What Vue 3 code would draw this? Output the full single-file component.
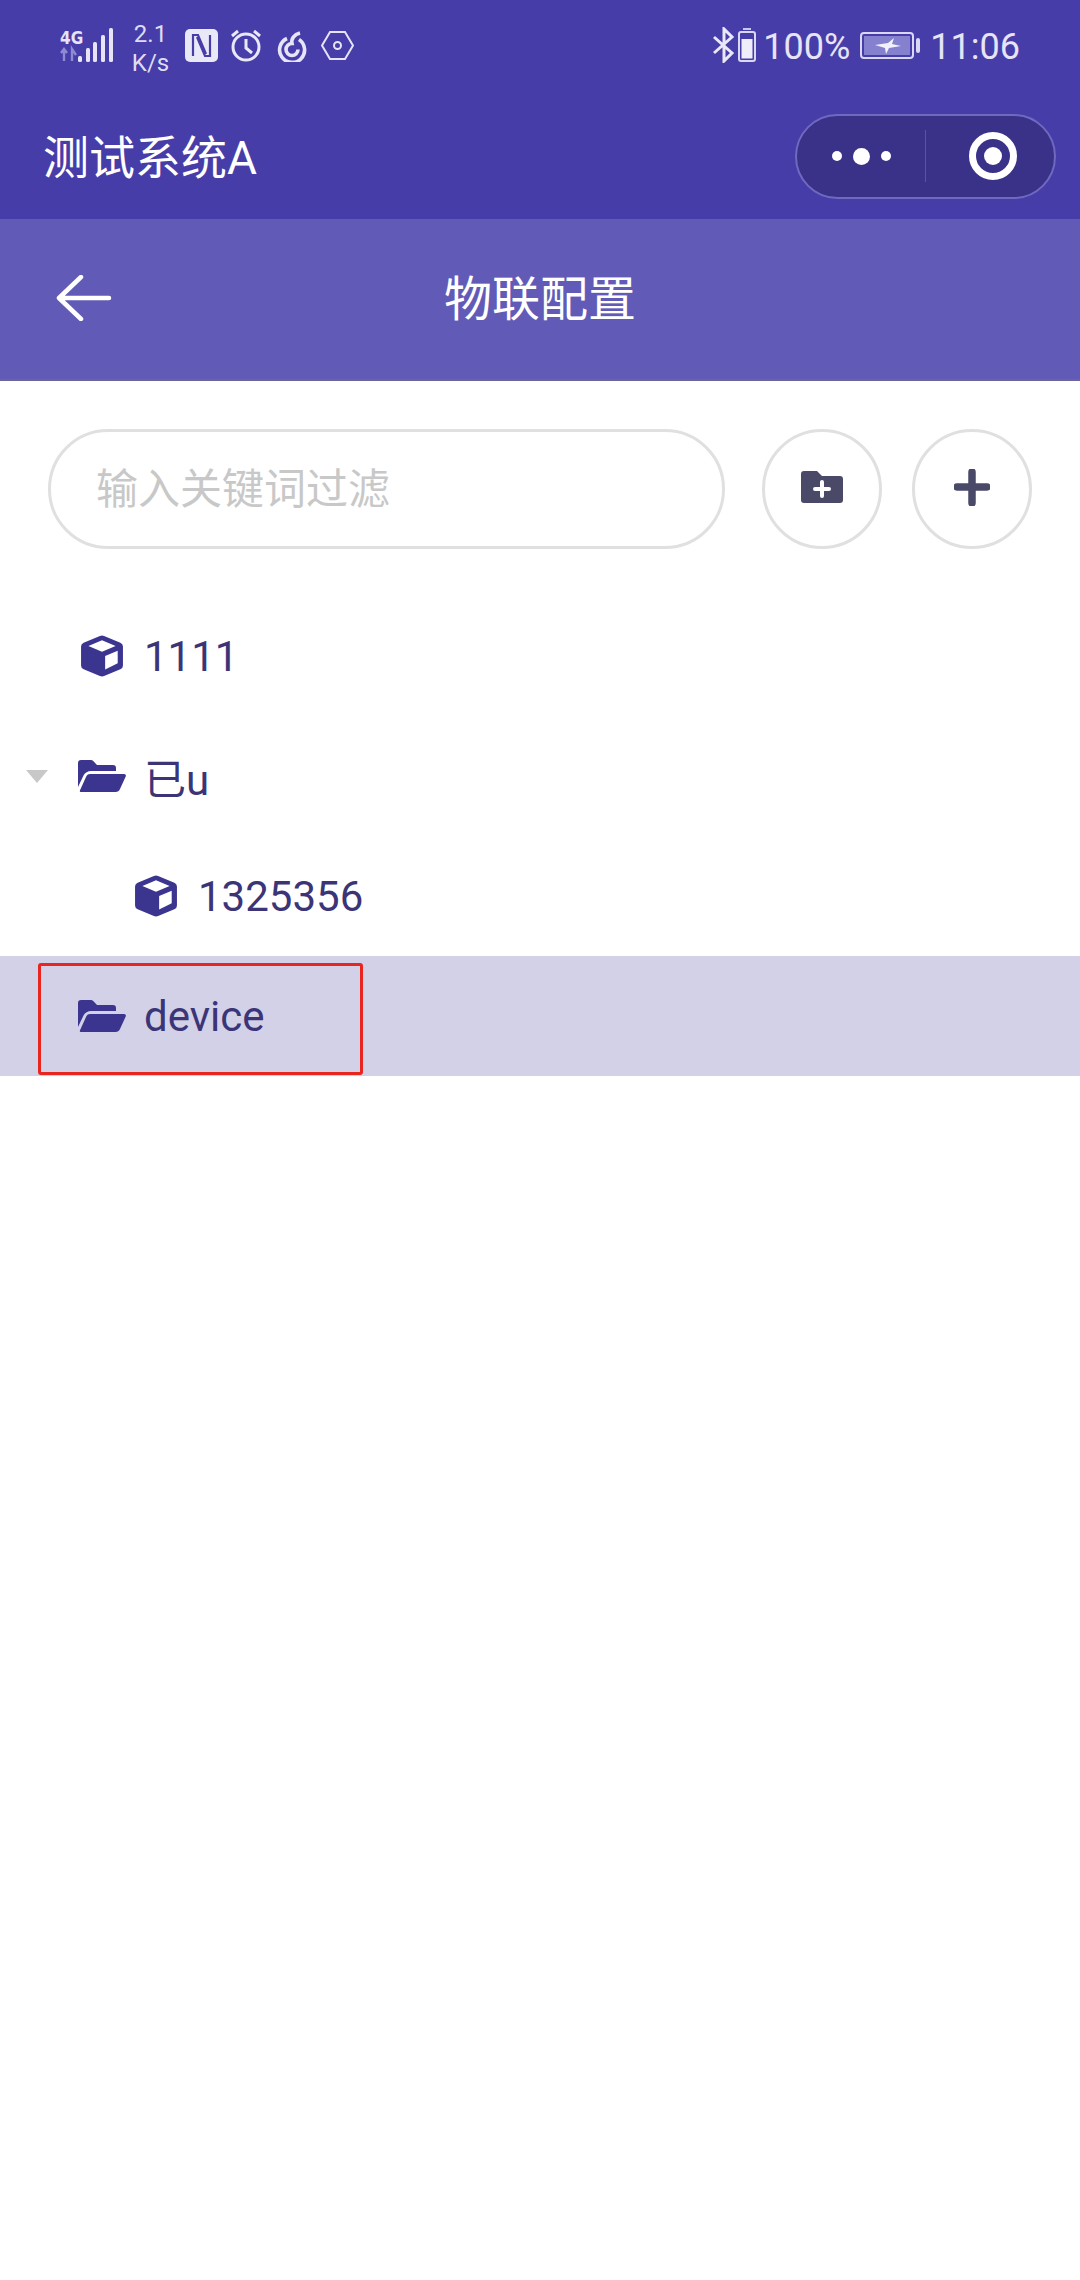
<template>
  <div class="page">
    <header class="top">
      <div class="status">
        <div class="status-left">
          <svg class="signal" width="53" height="34" viewBox="0 0 53 34">
            <text x="0" y="16" class="net">4G</text>
            <path d="M4 21v12M1 25l3-4 3 4M12 33V21l4 6" fill="none" stroke="#8f8ad2" stroke-width="2.4" />
            <rect x="18" y="28" width="4" height="6" rx="1.5" fill="#e6e4f6" />
            <rect x="26" y="20" width="4" height="14" rx="1.5" fill="#e6e4f6" />
            <rect x="33" y="14" width="4" height="20" rx="1.5" fill="#e6e4f6" />
            <rect x="41" y="7" width="4" height="27" rx="1.5" fill="#e6e4f6" />
            <rect x="49" y="0" width="4" height="34" rx="1.5" fill="#e6e4f6" />
          </svg>
          <div class="speed"><span>2.1</span><span>K/s</span></div>
          <svg class="ic-n" width="33" height="33" viewBox="0 0 33 33">
            <rect width="33" height="33" rx="5" fill="#e9e8f7" />
            <path d="M8 27V6h5l8 19M25 6v21h-5L12 8" fill="none" stroke="#473da9" stroke-width="2.2" />
          </svg>
          <svg class="ic-alarm" width="32" height="33" viewBox="0 0 32 33" fill="none" stroke="#e9e8f7" stroke-width="3">
            <circle cx="16" cy="18" r="13" />
            <path d="M16 10v9l6 5M2 7l6-5M30 7l-6-5" />
          </svg>
          <svg class="ic-music" width="30" height="31" viewBox="0 0 30 31" fill="none" stroke="#e6e4f6" stroke-width="3.6">
            <path d="M10 7.500A12.500 12.500 0 1 0 22 8.500" />
            <path d="M21 18.500a6 6 0 1 1-6-6C14 8 17 3.500 23 2" />
          </svg>
          <svg class="ic-hex" width="33" height="29" viewBox="0 0 33 29" fill="none" stroke="#e6e4f6" stroke-width="2">
            <path d="M9 1h15l8 13.500-8 13.500H9L1 14.500z" />
            <circle cx="16.500" cy="14.500" r="3.500" />
          </svg>
        </div>
        <div class="status-right">
          <svg class="ic-bt" width="23" height="36" viewBox="0 0 23 36" fill="none" stroke="#e9e8f7" stroke-width="3">
            <path d="M2 10l18 16-8 8V2l8 8L2 26" />
          </svg>
          <svg class="ic-cell" width="18" height="34" viewBox="0 0 18 34">
            <rect x="5" y="0" width="8" height="2" fill="#c9c6ec" />
            <rect x="1" y="4" width="16" height="29" rx="2" fill="none" stroke="#d9d7f2" stroke-width="2" />
            <rect x="3.500" y="11" width="11" height="19.500" fill="#eeedf9" />
          </svg>
          <span class="pct">100%</span>
          <svg class="ic-batt" width="60" height="27" viewBox="0 0 60 27">
            <rect x="1" y="1" width="52" height="25" rx="3" fill="none" stroke="#d9d7f2" stroke-width="2" />
            <rect x="4" y="4" width="46" height="19" fill="#8681cf" />
            <path d="M15 13l13-2 6-5-2 6 9 2-12 2-3 6-1-6z" fill="#f2f1fb" />
            <rect x="56" y="6" width="4" height="15" rx="2" fill="#d9d7f2" />
          </svg>
          <span class="time">11:06</span>
        </div>
      </div>
      <div class="app-bar">
        <span class="app-title">测试系统A</span>
        <div class="capsule">
          <div class="capsule-more">
            <i class="dot"></i><i class="dot big"></i><i class="dot"></i>
          </div>
          <div class="capsule-line"></div>
          <div class="capsule-close"><i class="target"></i></div>
        </div>
      </div>
    </header>

    <nav class="sub-bar">
      <svg class="back" width="56" height="46" viewBox="0 0 56 46" fill="none" stroke="#fff" stroke-width="4.500" stroke-linecap="round" stroke-linejoin="round">
        <path d="M25 2L3 23l22 21M3 23h50" />
      </svg>
      <span class="sub-title">物联配置</span>
    </nav>

    <div class="search-row">
      <div class="search"><span>输入关键词过滤</span></div>
      <button class="round-btn">
        <svg width="42" height="32" viewBox="0 0 42 32">
          <path d="M3 0h13l5 5h18a3 3 0 0 1 3 3v21a3 3 0 0 1-3 3H3a3 3 0 0 1-3-3V3a3 3 0 0 1 3-3z" fill="#4a4a68" />
          <path d="M21 11v14M14 18h14" stroke="#fff" stroke-width="4" stroke-linecap="round" />
        </svg>
      </button>
      <button class="round-btn">
        <svg width="36" height="37" viewBox="0 0 36 37">
          <path d="M18 3v31M3 18h30" stroke="#4a4a68" stroke-width="7.500" stroke-linecap="round" />
        </svg>
      </button>
    </div>

    <ul class="tree">
      <li v-for="node in nodes" :key="node.label" class="tree-row" :class="{ active: node.active }" :style="{ paddingLeft: node.indent + 'px' }">
        <span v-if="node.caret" class="caret"></span>
        <svg v-if="node.type === 'cube'" class="ic-cube" width="44" height="42" viewBox="0 0 42 40">
          <path d="M19 .800a5 5 0 0 1 4 0l15.500 6.500a4 4 0 0 1 2.500 3.700v18a4 4 0 0 1-2.500 3.700L23 39.200a5 5 0 0 1-4 0L3.500 32.700A4 4 0 0 1 1 29V11a4 4 0 0 1 2.500-3.700z" fill="#3b3590" />
          <path d="M21 5l13 5.500L21 16 8 10.500z" fill="#fff" />
          <path d="M24 20l12-5v12l-12 6z" fill="#fff" />
        </svg>
        <svg v-else class="ic-folder" width="48" height="32" viewBox="0 0 48 32">
          <path d="M0 3a3 3 0 0 1 3-3h10a3 3 0 0 1 2 .8L19 5h16a3 3 0 0 1 3 3v3H13c-3 0-6 1.500-7.500 4.500L0 27z" fill="#3b3590" />
          <path d="M12 14h34c1.500 0 2.300 1.200 1.700 2.500L42 29c-.8 1.800-2.300 3-4.500 3H3c-1 0-1.500-.8-1-1.800L8 17c.8-2 2-3 4-3z" fill="#3b3590" />
        </svg>
        <span class="tree-label">{{ node.label }}</span>
        <div v-if="node.active" class="focus-box"></div>
      </li>
    </ul>
  </div>
</template>

<script setup>
const nodes = [
  { label: '1111', type: 'cube', indent: 80 },
  { label: '已u', type: 'folder', indent: 26, caret: true },
  { label: '1325356', type: 'cube', indent: 134 },
  { label: 'device', type: 'folder', indent: 78, active: true }
]
</script>

<style scoped>
.page {
  width: 1080px;
  height: 2280px;
  background: #fff;
  font-family: Roboto, "Noto Sans CJK SC", sans-serif;
  overflow: hidden;
}

.top {
  height: 219px;
  background: #473da9;
  box-sizing: border-box;
}

.status {
  height: 92px;
  display: flex;
  justify-content: space-between;
  padding: 20px 60px 0;
  box-sizing: border-box;
}

.status-left,
.status-right {
  display: flex;
  align-items: flex-start;
}

.signal {
  margin-top: 8px;
}

.net {
  font-family: "Liberation Sans Narrow", "DejaVu Sans Condensed", Roboto, sans-serif;
  font-size: 17px;
  font-weight: 700;
  fill: #e6e4f6;
}

.speed {
  margin-left: 19px;
  width: 37px;
  display: flex;
  flex-direction: column;
  align-items: center;
  font-size: 24px;
  line-height: 29px;
  color: #dedcf3;
}

.ic-n {
  margin: 9px 0 0 16px;
}

.ic-alarm {
  margin: 9px 0 0 12px;
}

.ic-music {
  margin: 11px 0 0 15px;
}

.ic-hex {
  margin: 11px 0 0 14px;
}

.ic-bt {
  margin-top: 7px;
}

.ic-cell {
  margin: 8px 0 0 3px;
}

.pct,
.time {
  font-size: 36px;
  line-height: 42px;
  color: #e6e4f6;
  margin-top: 6px;
}

.pct {
  margin-left: 7px;
}

.ic-batt {
  margin: 12px 0 0 10px;
}

.time {
  margin-left: 10px;
}

.app-bar {
  display: flex;
  align-items: center;
  justify-content: space-between;
  padding: 20px 24px 0 43px;
}

.app-title {
  font-size: 46px;
  line-height: 84px;
  color: #fff;
  margin-top: 4px;
}

.capsule {
  width: 261px;
  height: 85px;
  display: flex;
  align-items: center;
  box-sizing: border-box;
  background: #3a3189;
  border: 2px solid #6f69c0;
  border-radius: 43px;
}

.capsule-more {
  width: 128px;
  display: flex;
  align-items: center;
  justify-content: center;
  gap: 11px;
}

.dot {
  width: 10px;
  height: 10px;
  background: #fff;
  border-radius: 50%;
}

.dot.big {
  width: 17px;
  height: 17px;
}

.capsule-line {
  width: 1px;
  height: 52px;
  background: #5a52ad;
}

.capsule-close {
  flex: 1;
  display: flex;
  justify-content: center;
  padding-left: 5px;
}

.target {
  width: 48px;
  height: 48px;
  box-sizing: border-box;
  border: 7px solid #fff;
  border-radius: 50%;
  display: flex;
  align-items: center;
  justify-content: center;
}

.target::after {
  content: '';
  width: 18px;
  height: 18px;
  background: #fff;
  border-radius: 50%;
}

.sub-bar {
  position: relative;
  height: 162px;
  box-sizing: border-box;
  background: #615bb7;
  border-bottom: 2px solid #6a6699;
  display: flex;
  align-items: center;
  justify-content: center;
  padding-bottom: 9px;
}

.back {
  position: absolute;
  left: 56px;
  top: 56px;
}

.sub-title {
  font-size: 48px;
  color: #fff;
}

.search-row {
  display: flex;
  align-items: center;
  padding: 48px 48px 47px;
}

.search {
  width: 677px;
  height: 120px;
  box-sizing: border-box;
  border: 3px solid #e0e0e0;
  border-radius: 60px;
  display: flex;
  align-items: center;
  padding: 0 0 8px 45px;
  font-size: 42px;
  color: #c8c8c8;
  margin-right: 37px;
}

.round-btn {
  width: 120px;
  height: 120px;
  box-sizing: border-box;
  border: 3px solid #e0e0e0;
  border-radius: 50%;
  background: #fff;
  padding: 0 0 4px;
  display: flex;
  align-items: center;
  justify-content: center;
}

.round-btn + .round-btn {
  margin-left: 30px;
}

.tree {
  list-style: none;
  margin: 0;
  padding: 0;
}

.tree-row {
  position: relative;
  height: 120px;
  display: flex;
  align-items: center;
  box-sizing: border-box;
}

.tree-row.active {
  background: #d3d1e7;
}

.caret {
  width: 0;
  height: 0;
  border-left: 11px solid transparent;
  border-right: 11px solid transparent;
  border-top: 13px solid #c8c8c8;
  margin-right: 30px;
}

.ic-folder {
  margin-right: 18px;
}

.ic-cube {
  margin-right: 20px;
}

.tree-label {
  font-size: 42px;
  color: #3b3578;
}

.focus-box {
  position: absolute;
  left: 38px;
  top: 7px;
  width: 325px;
  height: 112px;
  box-sizing: border-box;
  border: 3px solid #e8261f;
  border-radius: 3px;
}
</style>
